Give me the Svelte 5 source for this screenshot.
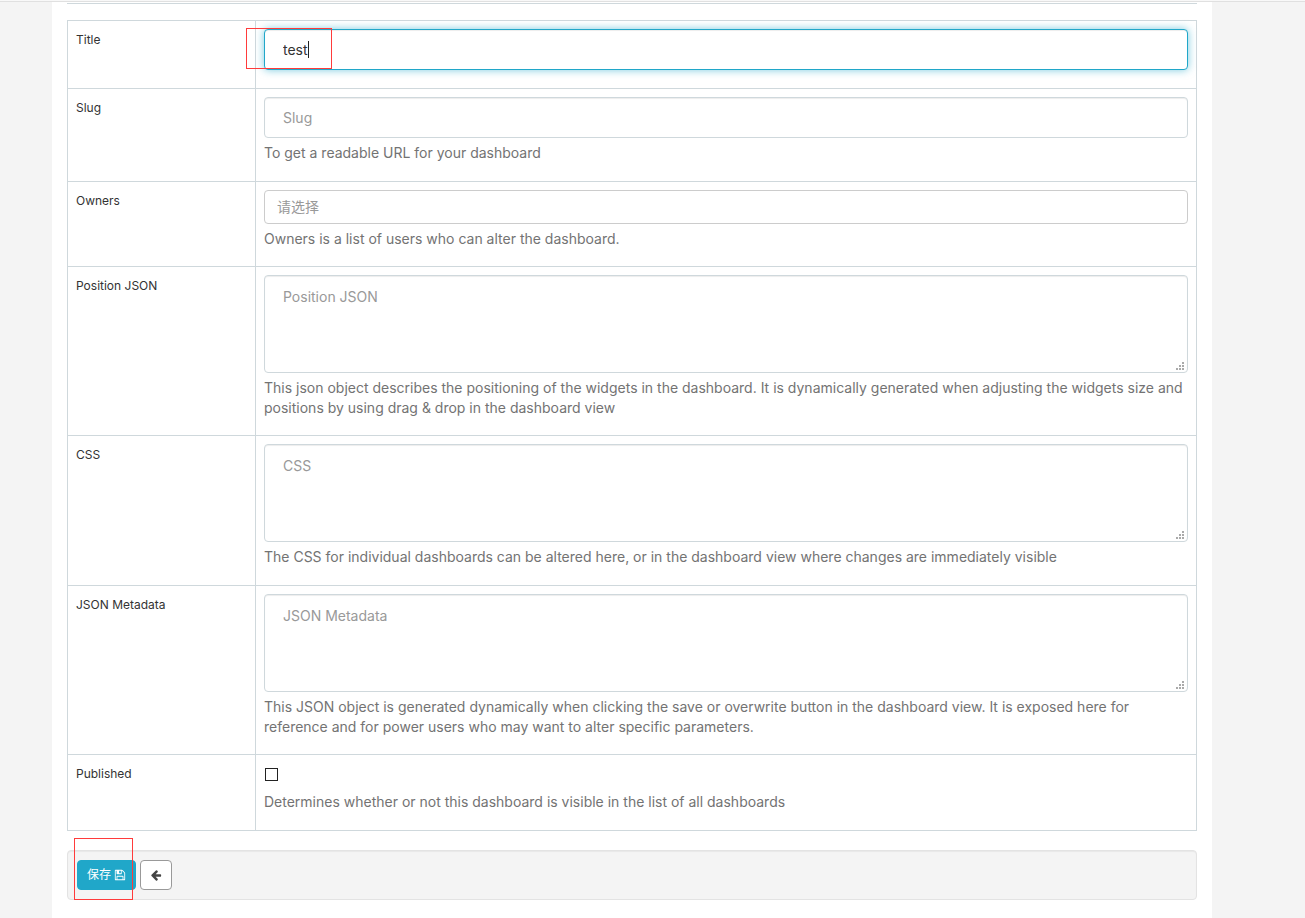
<script>
  let title = $state('test');
  let slug = $state('');
  let owners = $state('');
  let published = $state(false);

  const areas = $state([
    {
      id: 'position_json',
      label: 'Position JSON',
      value: '',
      help: 'This json object describes the positioning of the widgets in the dashboard. It is dynamically generated when adjusting the widgets size and positions by using drag & drop in the dashboard view'
    },
    {
      id: 'css',
      label: 'CSS',
      value: '',
      help: 'The CSS for individual dashboards can be altered here, or in the dashboard view where changes are immediately visible'
    },
    {
      id: 'json_metadata',
      label: 'JSON Metadata',
      value: '',
      help: 'This JSON object is generated dynamically when clicking the save or overwrite button in the dashboard view. It is exposed here for reference and for power users who may want to alter specific parameters.'
    }
  ]);
</script>

<div class="topbar"></div>
<div class="page">
  <main class="container">
    <form onsubmit={(e) => e.preventDefault()}>
      <table>
        <tbody>
          <tr class="row-title">
            <th scope="row"><label for="title">Title</label></th>
            <td>
              <div class="field">
                <input id="title" class="control active" type="text" bind:value={title} />
                <span class="caret"></span>
                <span class="mark mark-title"></span>
              </div>
            </td>
          </tr>
          <tr class="row-slug">
            <th scope="row"><label for="slug">Slug</label></th>
            <td>
              <input id="slug" class="control" type="text" placeholder="Slug" bind:value={slug} />
              <p class="help">To get a readable URL for your dashboard</p>
            </td>
          </tr>
          <tr>
            <th scope="row"><label for="owners">Owners</label></th>
            <td>
              <input id="owners" class="control picker" type="text" placeholder="请选择" bind:value={owners} />
              <p class="help">Owners is a list of users who can alter the dashboard.</p>
            </td>
          </tr>
          {#each areas as area (area.id)}
            <tr class="row-area">
              <th scope="row"><label for={area.id}>{area.label}</label></th>
              <td>
                <div class="area">
                  <textarea id={area.id} class="control" placeholder={area.label} bind:value={area.value}></textarea>
                  <svg class="grip" viewBox="0 0 8 8" aria-hidden="true">
                    <path d="M6 0h2v2H6zM3 3h2v2H3zM6 3h2v2H6zM0 6h2v2H0zM3 6h2v2H3zM6 6h2v2H6z" />
                  </svg>
                </div>
                <p class="help">{area.help}</p>
              </td>
            </tr>
          {/each}
          <tr class="row-published">
            <th scope="row"><label for="published">Published</label></th>
            <td>
              <input id="published" class="check" type="checkbox" bind:checked={published} />
              <p class="help">Determines whether or not this dashboard is visible in the list of all dashboards</p>
            </td>
          </tr>
        </tbody>
      </table>

      <div class="well">
        <button class="btn primary" type="submit">
          保存
          <svg viewBox="0 0 1792 1792" aria-hidden="true">
            <path d="M512 1536h768v-384h-768v384zm896 0h128v-896q0-14-10-38.5t-20-34.5l-281-281q-10-10-34-20t-39-10v416q0 40-28 68t-68 28h-576q-40 0-68-28t-28-68v-416h-128v1280h128v-416q0-40 28-68t68-28h832q40 0 68 28t28 68v416zm-384-928v-320q0-13-9.5-22.5t-22.5-9.5h-192q-13 0-22.5 9.5t-9.5 22.5v320q0 13 9.5 22.5t22.5 9.5h192q13 0 22.5-9.5t9.5-22.5zm640 32v928q0 40-28 68t-68 28h-1344q-40 0-68-28t-28-68v-1344q0-40 28-68t68-28h928q40 0 88 20t76 48l280 280q28 28 48 76t20 88z" />
          </svg>
        </button>
        <button class="btn" type="button" aria-label="Back">
          <svg viewBox="0 0 1792 1792" aria-hidden="true">
            <path d="M1664 896v128q0 53-32.5 90.5t-84.5 37.5h-704l293 294q38 36 38 90t-38 90l-75 76q-37 37-90 37-52 0-91-37l-651-652q-37-37-37-90 0-52 37-91l651-650q38-38 91-38 52 0 90 38l75 74q38 38 38 91t-38 91l-293 293h704q52 0 84.5 37.5t32.5 90.5z" />
          </svg>
        </button>
        <span class="mark mark-save"></span>
      </div>
    </form>
  </main>
</div>

<style>
  :global(body) {
    background: #f4f4f4;
    color: #333;
    font-family: Inter, "Noto Sans CJK SC", sans-serif;
    font-size: 14px;
    line-height: 20px;
  }
  * {
    box-sizing: border-box;
  }
  .topbar {
    height: 2px;
    background: #f8f8f8;
    border-bottom: 1px solid #e0e0e0;
  }
  .page {
    padding: 0 93px 0 52px;
  }
  .container {
    padding: 1px 15px 18px;
    background: #fff;
  }
  form {
    border-top: 1px solid #cfd8dc;
    padding-top: 16px;
  }
  table {
    width: 100%;
    border-collapse: collapse;
    table-layout: fixed;
  }
  th,
  td {
    border: 1px solid #cfd8dc;
    padding: 8px;
    vertical-align: top;
    text-align: left;
  }
  th {
    width: 188px;
    padding-top: 9px;
    font-size: 12px;
    font-weight: 400;
  }
  td {
    padding-bottom: 17px;
  }
  .row-title {
    height: 68px;
  }
  .row-slug {
    height: 93px;
  }
  .row-area {
    height: 150px;
  }
  .row-published {
    height: 76px;
  }
  .field,
  .area {
    position: relative;
  }
  .control {
    display: block;
    width: 100%;
    height: 41px;
    margin: 0;
    padding: 8px 18px;
    border: 1px solid #cfd8dc;
    border-radius: 4px;
    outline: 0;
    background: #fff;
    box-shadow: inset 0 1px 1px rgba(0, 0, 0, 0.075);
    color: #333;
    font: inherit;
    resize: none;
  }
  .control::placeholder {
    color: #999;
    opacity: 1;
  }
  .active {
    border-color: #20a7c9;
    box-shadow: inset 0 1px 1px rgba(0, 0, 0, 0.075), 0 0 8px rgba(32, 167, 201, 0.6);
    caret-color: transparent;
  }
  textarea.control {
    height: 98px;
    padding: 11px 18px;
  }
  .picker {
    height: 34px;
    padding: 5px 12px 7px;
    border-color: #ccc;
    box-shadow: none;
  }
  .grip {
    position: absolute;
    right: 4px;
    bottom: 3px;
    width: 8px;
    height: 8px;
    fill: #aaa;
  }
  .caret {
    position: absolute;
    top: 12px;
    left: 44px;
    width: 1px;
    height: 17px;
    background: #222;
  }
  .help {
    margin: 5px 0 0;
    color: #737373;
  }
  .check {
    display: block;
    appearance: none;
    width: 13px;
    height: 13px;
    margin: 5px 1px 11px;
    border: 1px solid #222;
    background: #fff;
  }
  .check:checked {
    background: #20a7c9;
  }
  .well {
    position: relative;
    display: flex;
    gap: 4px;
    margin-top: 19px;
    padding: 9px;
    border: 1px solid #e3e3e3;
    border-radius: 4px;
    background: #f4f4f4;
    box-shadow: inset 0 1px 1px rgba(0, 0, 0, 0.05);
  }
  .btn {
    display: flex;
    align-items: center;
    gap: 3px;
    height: 30px;
    padding: 0 9px;
    border: 1px solid #999;
    border-radius: 4px;
    background: #fff;
    color: #444;
    font: inherit;
    font-size: 12px;
  }
  .btn svg {
    width: 12px;
    height: 12px;
    fill: currentColor;
  }
  .primary {
    border-color: #20a7c9;
    background: #20a7c9;
    color: #fff;
  }
  .mark {
    position: absolute;
    border: 1px solid #ff3b3b;
    pointer-events: none;
  }
  .mark-title {
    top: -1px;
    left: -18px;
    width: 86px;
    height: 41px;
  }
  .mark-save {
    top: -13px;
    left: 6px;
    width: 59px;
    height: 62px;
  }
</style>
